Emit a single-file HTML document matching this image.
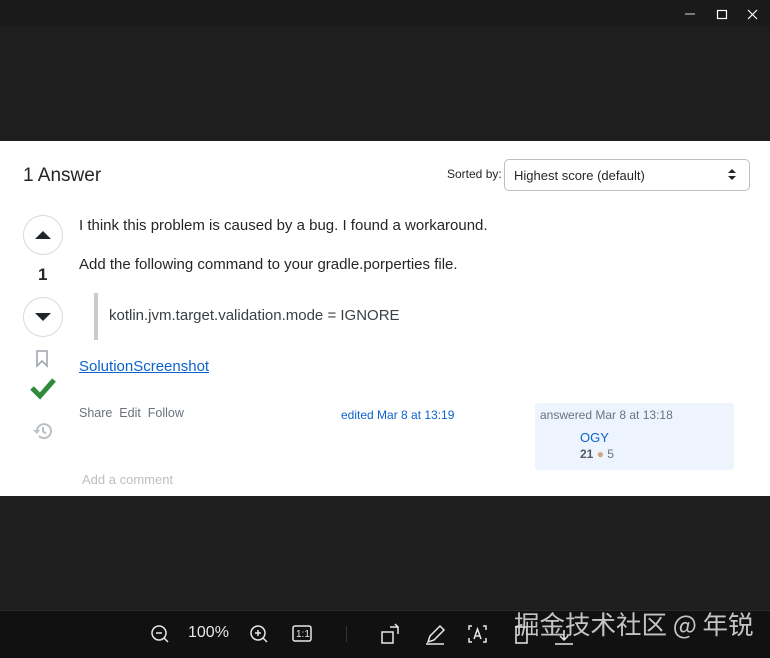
<!DOCTYPE html>
<html><head><meta charset="utf-8"><style>
*{margin:0;padding:0;box-sizing:border-box}
body{width:770px;height:658px;background:#1e1e1e;position:relative;overflow:hidden;font-family:"Liberation Sans","Noto Sans CJK SC",sans-serif}
.a{position:absolute}
.top{left:0;top:0;width:770px;height:27px;background:#1a1a1a}
.page{left:0;top:141px;width:770px;height:355px;background:#fff}
.bar{left:0;top:610px;width:770px;height:48px;background:#111;border-top:1px solid #2a2a2a}
.t{color:#232629;font-size:15px;white-space:nowrap}
.circ{width:40px;height:40px;border:1px solid #d6d9dc;border-radius:50%}
</style></head><body>
<div class="a top"></div>
<svg class="a" style="left:684px;top:8px" width="80" height="14">
<line x1="1" y1="6" x2="11" y2="6" stroke="#999" stroke-width="1.5"/>
<rect x="33.5" y="2.5" width="9" height="8" fill="none" stroke="#fff" stroke-width="1.2"/>
<path d="M64 2L73 11M73 2L64 11" stroke="#fff" stroke-width="1.2"/>
</svg>
<div class="a page">
<div class="a t" style="left:23px;top:24px;font-size:19px">1 Answer</div>
<div class="a t" style="left:447px;top:26px;font-size:12px">Sorted by:</div>
<div class="a" style="left:504px;top:18px;width:246px;height:32px;border:1px solid #bbc0c4;border-radius:5px"></div>
<div class="a t" style="left:514px;top:27px;font-size:13px">Highest score (default)</div>
<svg class="a" style="left:727px;top:27px" width="10" height="14"><path d="M1 5L5 1L9 5Z M1 8L5 12L9 8Z" fill="#232629"/></svg>
<div class="a circ" style="left:23px;top:74px"></div>
<svg class="a" style="left:34px;top:89px" width="18" height="10"><path d="M1 9L9 1L17 9Z" fill="#232629"/></svg>
<div class="a t" style="left:38px;top:124px;font-size:17px;font-weight:bold">1</div>
<div class="a circ" style="left:23px;top:156px"></div>
<svg class="a" style="left:34px;top:171px" width="18" height="10"><path d="M1 1L9 9L17 1Z" fill="#232629"/></svg>
<svg class="a" style="left:35px;top:209px" width="14" height="18"><path d="M2 1H12V16L7 11L2 16Z" fill="none" stroke="#9fa6ad" stroke-width="1.6"/></svg>
<svg class="a" style="left:30px;top:235px" width="26" height="24"><path d="M2 12L10 20L24 4" fill="none" stroke="#2f8a3c" stroke-width="5"/></svg>
<svg class="a" style="left:32px;top:280px" width="20" height="20"><path d="M5 10a7 7 0 1 1 2 5" fill="none" stroke="#bbc0c4" stroke-width="2"/><path d="M1 9L5 13L8 9Z" fill="#bbc0c4"/><path d="M11 6V10.5L14 12.5" fill="none" stroke="#bbc0c4" stroke-width="2"/></svg>
<div class="a t" style="left:79px;top:76px">I think this problem is caused by a bug. I found a workaround.</div>
<div class="a t" style="left:79px;top:115px">Add the following command to your gradle.porperties file.</div>
<div class="a" style="left:94px;top:152px;width:4px;height:47px;background:#c8ccd0"></div>
<div class="a t" style="left:109px;top:166px;color:#3b4045">kotlin.jvm.target.validation.mode = IGNORE</div>
<div class="a t" style="left:79px;top:217px;color:#0c63ce;text-decoration:underline">SolutionScreenshot</div>
<div class="a t" style="left:79px;top:265px;font-size:12.5px;color:#6a737c">Share&nbsp; Edit&nbsp; Follow</div>
<div class="a t" style="left:341px;top:267px;font-size:12px;color:#0c63ce">edited Mar 8 at 13:19</div>
<div class="a" style="left:535px;top:262px;width:199px;height:67px;background:#edf4fd;border-radius:3px"></div>
<div class="a t" style="left:540px;top:267px;font-size:12px;color:#6a737c">answered Mar 8 at 13:18</div>
<div class="a t" style="left:580px;top:289px;font-size:13px;color:#0c63ce">OGY</div>
<div class="a t" style="left:580px;top:306px;font-size:12px;color:#6a737c"><b style="color:#525960">21</b> <span style="color:#d1a684">●</span> 5</div>
<div class="a t" style="left:82px;top:331px;font-size:13px;color:#bbc0c4">Add a comment</div>
</div>
<div class="a bar"></div>
<svg class="a" style="left:148px;top:622px" width="300" height="26" fill="none" stroke="#e8e8e8" stroke-width="1.5">
<circle cx="11" cy="11" r="7"/><line x1="8" y1="11" x2="14" y2="11"/><line x1="16" y1="16" x2="20" y2="20"/>
<circle cx="110" cy="11" r="7"/><line x1="107" y1="11" x2="113" y2="11"/><line x1="110" y1="8" x2="110" y2="14"/><line x1="115" y1="16" x2="119" y2="20"/>
<rect x="145" y="4" width="18" height="15" rx="2"/>
</svg>
<div class="a" style="left:188px;top:624px;color:#e8e8e8;font-size:16px">100%</div>
<div class="a" style="left:296px;top:629px;color:#e8e8e8;font-size:10px">1:1</div>
<div class="a" style="left:346px;top:626px;width:1px;height:16px;background:#333"></div>
<svg class="a" style="left:380px;top:622px" width="200" height="26" fill="none" stroke="#e8e8e8" stroke-width="1.5">
<rect x="2" y="10" width="11" height="11"/><path d="M10 5H18V12M15 2L18 5"/>
<path d="M48 20L50 14L60 4L64 8L54 18Z M46 22H64"/>
<path d="M92 4H89V8M92 20H89V16M103 4H106V8M103 20H106V16M94 17L97.5 7L101 17M95 14H100"/>
<rect x="136" y="5" width="11" height="16"/>
<path d="M175 22H193M184 8V18M180 14L184 18L188 14"/>
</svg>
<div class="a" style="left:514px;top:605px;color:#d8d8d8;font-size:25.5px;white-space:nowrap;font-family:'Noto Sans CJK SC','Liberation Sans',sans-serif;opacity:.9">掘金技术社区 @ 年锐</div>
</body></html>
